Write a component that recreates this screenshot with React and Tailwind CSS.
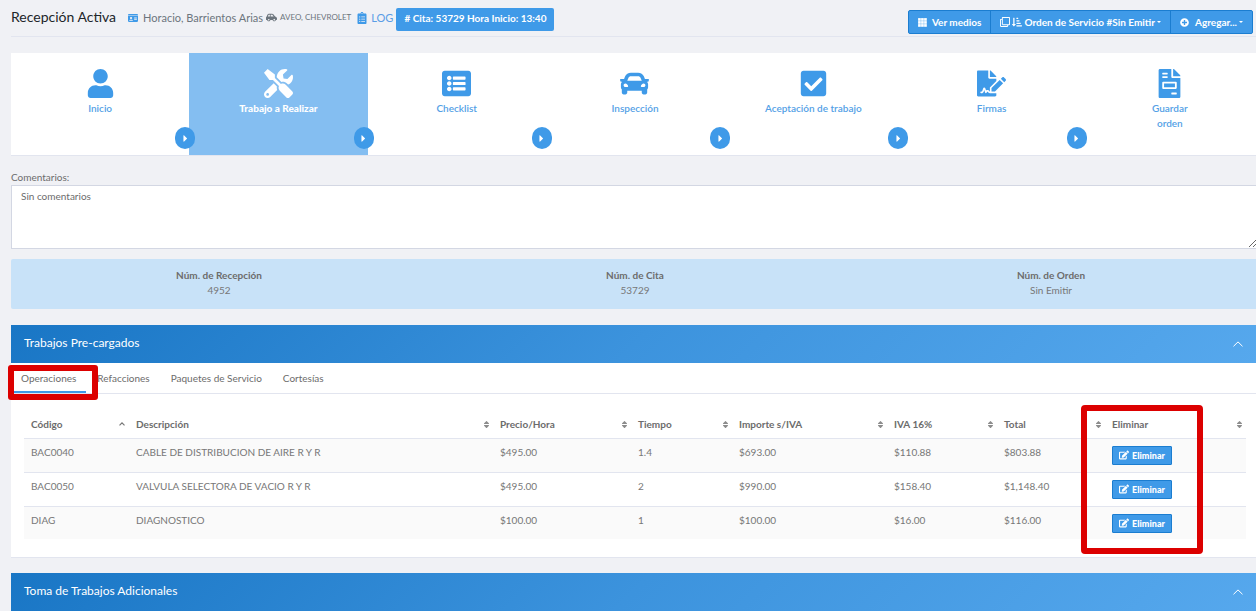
import { FaUser, FaTools, FaListAlt, FaCar, FaCheckSquare, FaFileSignature, FaFileInvoice, FaCaretRight, FaIdCard, FaClipboardList, FaRegClone, FaSortAmountDownAlt, FaPlusCircle, FaEdit, FaSort } from "react-icons/fa";
import { FaCarSide } from "react-icons/fa6";
import { useState } from "react";

const steps = [
  { label: "Inicio", Icon: FaUser },
  { label: "Trabajo a Realizar", Icon: FaTools, active: true },
  { label: "Checklist", Icon: FaListAlt },
  { label: "Inspección", Icon: FaCar },
  { label: "Aceptación de trabajo", Icon: FaCheckSquare },
  { label: "Firmas", Icon: FaFileSignature },
  { label: "Guardar orden", Icon: FaFileInvoice },
];

const columns = [
  ["Código", "w-[105px]"],
  ["Descripción", "w-[364px]"],
  ["Precio/Hora", "w-[138px]"],
  ["Tiempo", "w-[101px]"],
  ["Importe s/IVA", "w-[155px]"],
  ["IVA 16%", "w-[110px]"],
  ["Total", "w-[108px]"],
  ["Eliminar", "w-[141px]"],
];

const rows = [
  ["BAC0040", "CABLE DE DISTRIBUCION DE AIRE R Y R", "$495.00", "1.4", "$693.00", "$110.88", "$803.88"],
  ["BAC0050", "VALVULA SELECTORA DE VACIO R Y R", "$495.00", "2", "$990.00", "$158.40", "$1,148.40"],
  ["DIAG", "DIAGNOSTICO", "$100.00", "1", "$100.00", "$16.00", "$116.00"],
];

const tabs = ["Operaciones", "Refacciones", "Paquetes de Servicio", "Cortesías"];

function GridIcon() {
  return (
    <svg viewBox="0 0 9 9" className="size-[9px]" fill="currentColor" aria-hidden="true">
      {[0, 3, 6].map((y) => [0, 3, 6].map((x) => <rect key={`${x}${y}`} x={x + 0.1} y={y + 0.1} width="2.7" height="2.7" />))}
    </svg>
  );
}

function Chevron({ className }) {
  return (
    <svg viewBox="0 0 10 6" className={className} fill="none" stroke="currentColor" aria-hidden="true">
      <path d="M0.5 5.3 5 0.9 9.5 5.3" />
    </svg>
  );
}

function SortedUp() {
  return (
    <svg viewBox="0 0 6 4" className="h-[4px] w-[6px]" fill="none" stroke="#777" strokeWidth="1.2" aria-hidden="true">
      <path d="M0.5 3.4 3 0.9 5.5 3.4" />
    </svg>
  );
}

function Caret() {
  return (
    <svg viewBox="0 0 4 2" className="h-[2px] w-[4px]" fill="currentColor" aria-hidden="true">
      <path d="M0 0h4L2 2z" />
    </svg>
  );
}

function PanelHeader({ title }) {
  return (
    <header className="flex h-[38px] items-center justify-between bg-linear-[135deg] from-[#1976c5] via-[#3c93dd] to-[#56a8ed] px-[13px] text-white">
      <h2 className="pb-[3px] text-[12px]">{title}</h2>
      <button type="button" aria-label={`Contraer ${title}`}>
        <Chevron className="h-[6px] w-[10px]" />
      </button>
    </header>
  );
}

export default function App() {
  const [comments, setComments] = useState("Sin comentarios");
  return (
    <main className="min-h-screen overflow-x-hidden bg-[#f0f1f5] pl-[11px] font-['Lato','Noto_Sans',sans-serif] text-[10px] leading-[15px] text-[#6c6c6c]">
      <div className="flex h-[37px] items-start justify-between border-b border-[#e2e5ef] pr-[3px]">
        <div className="flex items-center pt-[7px]">
          <h1 className="pb-[5px] text-[14px] leading-[19px] text-[#212529]">Recepción Activa</h1>
          <div className="ml-[12px] flex items-center pb-[3px] text-[11px] text-[#6c757d]">
            <FaIdCard className="h-[10px] w-auto text-[#3f9ae8]" />
            <span className="ml-[5px]">Horacio, Barrientos Arias</span>
            <FaCarSide className="ml-[3px] h-[11px] w-auto" />
            <span className="ml-[3px] text-[8px]">AVEO, CHEVROLET</span>
            <a href="#log" className="ml-[5px] flex items-center gap-[3px] text-[#5a9de6]">
              <FaClipboardList className="h-[12px] w-auto text-[#3f9ae8]" />
              LOG
            </a>
          </div>
          <span className="ml-[3px] flex h-[23px] items-center rounded-[2px] bg-[#3f9ae8] px-[8px] pb-[2px] font-bold text-white">
            # Cita: 53729 Hora Inicio: 13:40
          </span>
        </div>
        <div className="mt-[10px] flex h-[24px] divide-x divide-[#1b7dd0] rounded-[2px] border border-[#1b7dd0] bg-[#3f9ae8] font-bold text-white">
          <button type="button" className="flex items-center gap-[5px] px-[9px]">
            <GridIcon />
            Ver medios
          </button>
          <button type="button" className="flex items-center gap-[2px] px-[9px]">
            <FaRegClone className="size-[10px]" />
            <FaSortAmountDownAlt className="size-[10px]" />
            Orden de Servicio #Sin Emitir
            <Caret />
          </button>
          <button type="button" className="flex items-center gap-[2px] px-[9px]">
            <FaPlusCircle className="mr-[4px] size-[9px]" />
            Agregar...
            <Caret />
          </button>
        </div>
      </div>

      <nav className="mt-[16px] -mr-[3px] grid h-[103px] grid-cols-7 border-b border-[#e2e5ef] bg-white">
        {steps.map(({ label, Icon, active }, i) => (
          <a
            key={label}
            href={`#paso-${i + 1}`}
            className={`relative flex flex-col items-center pt-[16px] text-center ${active ? "bg-[#84bef1] font-black text-white" : "font-semibold text-[#549fe6]"}`}
          >
            <Icon className={`h-[29px] w-auto ${active ? "text-white" : "text-[#3f9ae8]"}`} />
            <span className={`mt-[3px] ${i === 6 ? "w-[50px]" : ""}`}>{label}</span>
            {i < 6 && (
              <span className="absolute right-[-6px] bottom-[6px] z-10 flex h-[22px] w-[20px] items-center justify-center rounded-[10px] bg-[#3f9ae8] text-white">
                <FaCaretRight className="size-[11px]" />
              </span>
            )}
          </a>
        ))}
      </nav>

      <label htmlFor="comentarios" className="mt-[14px] block">Comentarios:</label>
      <textarea
        id="comentarios"
        value={comments}
        onChange={(e) => setComments(e.target.value)}
        className="block h-[64px] w-[calc(100%+2px)] border border-[#d3d7e3] bg-white px-[9px] py-[3px]"
      />

      <section className="mt-[10px] -mr-[3px] grid h-[50px] grid-cols-3 rounded-[2px] bg-[#c8e2f8] pt-[9px] text-center">
        {[["Núm. de Recepción", "4952"], ["Núm. de Cita", "53729"], ["Núm. de Orden", "Sin Emitir"]].map(([k, v]) => (
          <div key={k}>
            <strong className="block">{k}</strong>
            <span className="block text-[#777]">{v}</span>
          </div>
        ))}
      </section>

      <section className="mt-[16px] border-b border-[#e2e5ef] bg-white pb-[18px]">
        <PanelHeader title="Trabajos Pre-cargados" />
        <div className="relative flex h-[31px] gap-px border-b border-[#e2e5ef]">
          {tabs.map((t, i) => (
            <button key={t} type="button" className={`px-[10px] ${i === 0 ? "shadow-[inset_0_-2px_0_#3f9ae8]" : ""}`}>
              {t}
            </button>
          ))}
          <span className="pointer-events-none absolute top-[2px] left-[-3px] h-[35px] w-[90px] rounded-[3px] border-6 border-[#dc0000]" />
        </div>
        <div className="relative mt-[17px] pr-[10px] pl-[13px]">
          <table className="w-full table-fixed border-collapse text-left">
            <thead>
              <tr className="h-[27px]">
                {columns.map(([name, width], i) => (
                  <th key={name} className={`pr-[2px] pl-[7px] font-bold ${width}`}>
                    <div className="flex items-center justify-between">
                      {name}
                      {i === 0 ? <span className="pr-[2px]"><SortedUp /></span> : <FaSort className="size-[9px] text-[#8c8c8c]" />}
                    </div>
                  </th>
                ))}
              </tr>
            </thead>
            <tbody>
              {rows.map((row) => (
                <tr key={row[0]} className="h-[34px] border-t border-[#e2e5ef] align-top text-[#777] odd:bg-[#fafafa] last:h-[33px]">
                  {row.map((cell, i) => (
                    <td key={i} className="px-[7px] pt-[6px]">{cell}</td>
                  ))}
                  <td className="px-[7px] pt-[7px]">
                    <button type="button" className="flex h-[19px] w-[60px] items-center justify-center gap-[3px] rounded-[1px] border border-[#1b7dd0] bg-[#3f9ae8] text-[9px] font-black text-white">
                      <FaEdit className="h-[10px] w-auto" />
                      Eliminar
                    </button>
                  </td>
                </tr>
              ))}
            </tbody>
          </table>
          <span className="pointer-events-none absolute top-[-6px] right-[53px] h-[149px] w-[122px] rounded-[4px] border-6 border-[#dc0000]" />
        </div>
      </section>

      <section className="mt-[15px]">
        <PanelHeader title="Toma de Trabajos Adicionales" />
      </section>
    </main>
  );
}
